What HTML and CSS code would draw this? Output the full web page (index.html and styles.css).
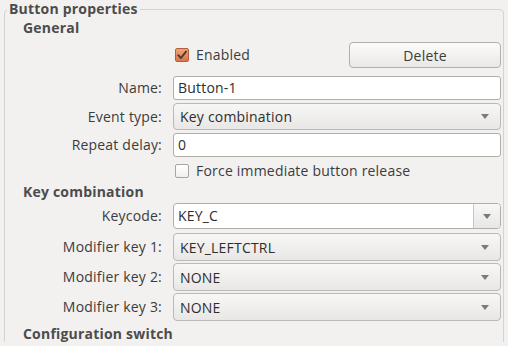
FILE: index.html
```html
<!DOCTYPE html>
<html>
<head>
<meta charset="utf-8">
<link rel="stylesheet" href="styles.css">
</head>
<body>
<fieldset class="frame">
  <legend class="frame-title">Button properties</legend>
  <div class="section-title section-general">General</div>
  <div class="row row-enabled">
    <span></span>
    <div class="enabled-line">
      <label class="check"><span class="box box-on"><svg viewBox="0 0 14 14" width="14" height="14"><path d="M3.2 7.2 L6 10 L11 3.6" fill="none" stroke="#4a3a33" stroke-width="1.9" stroke-linecap="round" stroke-linejoin="round"/></svg></span>Enabled</label>
      <button class="btn">Delete</button>
    </div>
  </div>
  <div class="row row-name">
    <span class="label">Name:</span>
    <div class="entry">Button-1</div>
  </div>
  <div class="row row-tight">
    <span class="label">Event type:</span>
    <div class="combo"><span>Key combination</span><span class="arrow"></span></div>
  </div>
  <div class="row row-tight">
    <span class="label">Repeat delay:</span>
    <div class="entry">0</div>
  </div>
  <div class="row row-force">
    <span></span>
    <label class="check"><span class="box"></span>Force immediate button release</label>
  </div>
  <div class="section-title section-key">Key combination</div>
  <div class="row row-keycode">
    <span class="label">Keycode:</span>
    <div class="combo-entry"><span class="ce-text">KEY_C</span><span class="ce-btn"><span class="arrow"></span></span></div>
  </div>
  <div class="row row-mod1">
    <span class="label">Modifier key 1:</span>
    <div class="combo combo-tall"><span>KEY_LEFTCTRL</span><span class="arrow"></span></div>
  </div>
  <div class="row row-mod">
    <span class="label">Modifier key 2:</span>
    <div class="combo combo-tall"><span>NONE</span><span class="arrow"></span></div>
  </div>
  <div class="row row-mod">
    <span class="label">Modifier key 3:</span>
    <div class="combo combo-tall"><span>NONE</span><span class="arrow"></span></div>
  </div>
  <div class="section-title section-config">Configuration switch</div>
</fieldset>
</body>
</html>
```
FILE: styles.css
```css
html, body {
  margin: 0;
  padding: 0;
  background: #f2f1f0;
  overflow: hidden;
}
body {
  font-family: "Open Sans", "DejaVu Sans", sans-serif;
  font-size: 14px;
  letter-spacing: 0.2px;
  color: #3c3c3c;
  height: 346px;
}
.frame {
  margin: 1px 4px 0 4px;
  padding: 0 2px 0 0;
  border: 1px solid #d6d2ce;
  border-bottom: none;
  border-radius: 5px 5px 0 0;
  min-width: 0;
}
.frame-title {
  margin-left: 2px;
  padding: 0 2px;
  font-weight: bold;
  line-height: 16px;
  color: #4c4c4c;
}
.section-title {
  margin-left: 18px;
  font-weight: bold;
  line-height: 16px;
  color: #4c4c4c;
}
.section-general { margin-top: 3px; }
.row {
  display: grid;
  grid-template-columns: 157px 328px;
  column-gap: 11px;
  align-items: center;
}
.label {
  text-align: right;
  line-height: 16px;
}
.row-enabled { margin-top: 6px; }
.enabled-line {
  display: flex;
  justify-content: space-between;
  align-items: center;
}
.check {
  display: flex;
  align-items: center;
  margin-left: 2px;
  line-height: 16px;
}
.box {
  width: 12px;
  height: 12px;
  border: 1px solid #a8a4a0;
  border-radius: 2px;
  background: linear-gradient(#ffffff, #f0efee);
  margin-right: 7px;
  position: relative;
  flex: none;
}
.box-on {
  background: linear-gradient(#f2a27a, #de7448);
  border-color: #b45f3c;
}
.box-on svg {
  position: absolute;
  left: -1px;
  top: -1px;
}
.btn {
  width: 152px;
  height: 26px;
  font: inherit;
  letter-spacing: inherit;
  color: #3c3c3c;
  border: 1px solid #b3afab;
  border-radius: 4px;
  background: linear-gradient(#fbfbfa, #e9e8e6);
  padding: 0;
}
.row-name { margin-top: 8px; }
.row-tight { margin-top: 3px; }
.entry {
  height: 22px;
  border: 1px solid #b1ada9;
  border-radius: 3px;
  background: #ffffff;
  padding-left: 4px;
  line-height: 22px;
  color: #2e2e2e;
}
.combo {
  height: 25px;
  border: 1px solid #bcb8b4;
  border-radius: 4px;
  background: linear-gradient(#f7f7f6, #e8e7e5);
  display: flex;
  justify-content: space-between;
  align-items: center;
  padding: 0 11px 0 6px;
  color: #2e2e2e;
}
.combo-tall { height: 26px; }
.arrow {
  width: 0;
  height: 0;
  border-left: 4px solid transparent;
  border-right: 4px solid transparent;
  border-top: 5px solid #7a7a7a;
}
.row-force { margin-top: 6px; height: 16px; }
.section-key { margin-top: 5px; }
.row-keycode { margin-top: 3px; }
.combo-entry {
  height: 24px;
  border: 1px solid #b1ada9;
  border-radius: 4px;
  background: #ffffff;
  display: flex;
  overflow: hidden;
  color: #2e2e2e;
}
.ce-text {
  flex: 1;
  padding-left: 4px;
  line-height: 24px;
}
.ce-btn {
  width: 26px;
  border-left: 1px solid #c8c4c0;
  background: linear-gradient(#f7f7f6, #e8e7e5);
  display: flex;
  align-items: center;
  justify-content: center;
}
.row-mod1 { margin-top: 4px; }
.row-mod { margin-top: 2px; }
.section-config { margin-top: 5px; }
```
